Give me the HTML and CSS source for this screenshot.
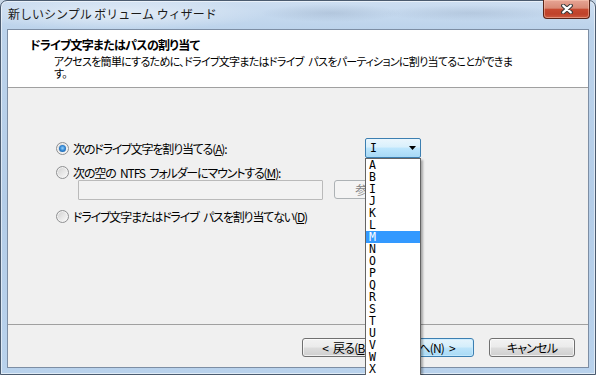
FILE: index.html
```html
<!DOCTYPE html>
<html lang="ja">
<head>
<meta charset="utf-8">
<title>新しいシンプル ボリューム ウィザード</title>
<link rel="stylesheet" href="styles.css">
</head>
<body>
<div class="window">
  <div class="titlebar">
    <span class="title">新しいシンプル ボリューム ウィザード</span>
    <div class="close" aria-label="閉じる">
      <svg width="12" height="10" viewBox="0 0 12 10">
        <path d="M2.2 1.6 L9.8 8.4 M9.8 1.6 L2.2 8.4" stroke="#3a3a3a" stroke-width="4.2" stroke-linecap="round" fill="none"/>
        <path d="M2.2 1.6 L9.8 8.4 M9.8 1.6 L2.2 8.4" stroke="#ffffff" stroke-width="2.2" stroke-linecap="round" fill="none"/>
      </svg>
    </div>
  </div>
  <div class="client">
    <div class="header">
      <div class="h-title">ドライブ文字またはパスの割り当て</div>
      <div class="h-sub">アクセスを簡単にするために、ドライブ文字またはドライブ パスをパーティションに割り当てることができま<br>す。</div>
    </div>
    <div class="content">
      <div class="row row-first">
        <div class="opt opt-first"><span class="radio checked"></span><span>次のドライブ文字を割り当てる(<u>A</u>):</span></div>
        <div class="combo">
          <span class="combo-val">I</span>
          <span class="combo-arrow"></span>
          <ul class="droplist">
            <li>A</li><li>B</li><li>I</li><li>J</li><li>K</li><li>L</li>
            <li class="sel">M</li><li>N</li><li>O</li><li>P</li><li>Q</li><li>R</li>
            <li>S</li><li>T</li><li>U</li><li>V</li><li>W</li><li>X</li>
          </ul>
        </div>
      </div>
      <div class="row row-second">
        <div class="opt"><span class="radio"></span><span>次の空の NTFS フォルダーにマウントする(<u>M</u>):</span></div>
      </div>
      <div class="field-row">
        <div class="field"></div>
        <div class="btn disabled">参照(<u>R</u>)...</div>
      </div>
      <div class="row row-third">
        <div class="opt"><span class="radio"></span><span>ドライブ文字またはドライブ パスを割り当てない(<u>D</u>)</span></div>
      </div>
    </div>
    <div class="footer">
      <div class="btn">&lt; 戻る(<u>B</u>)</div>
      <div class="btn default">次へ(N) &gt;</div>
      <div class="btn cancel">キャンセル</div>
    </div>
  </div>
</div>
</body>
</html>
```

FILE: styles.css
```css
html, body {
  margin: 0;
  padding: 0;
  width: 596px;
  height: 375px;
  overflow: hidden;
  background: #c7d6e6;
}

.window {
  box-sizing: border-box;
  width: 596px;
  height: 375px;
  border: 1px solid #4b5b6f;
  border-radius: 7px 7px 0 0;
  padding: 0 6px 6px 6px;
  display: flex;
  flex-direction: column;
  background: linear-gradient(180deg, #cddef1 0px, #bcd3eb 28px, #b4cde8 200px, #b9d2ec 100%);
  box-shadow: inset 0 0 0 1px rgba(255, 255, 255, 0.55);
  font-family: "Noto Sans CJK JP", "Noto Sans", sans-serif;
  font-size: 12px;
  color: #000;
}

.titlebar {
  height: 28px;
  display: flex;
  align-items: flex-start;
  margin: 0 -6px;
  padding: 0 6px;
  background:
    radial-gradient(ellipse 150px 16px at 118px 13px, rgba(255, 255, 255, 0.5), rgba(255, 255, 255, 0) 100%),
    radial-gradient(ellipse 70px 9px at 330px 12px, rgba(80, 100, 130, 0.16), rgba(80, 100, 130, 0) 100%),
    radial-gradient(ellipse 90px 8px at 470px 12px, rgba(80, 100, 130, 0.14), rgba(80, 100, 130, 0) 100%);
}

.title {
  margin-top: 5px;
  padding-left: 1px;
  line-height: 16px;
  white-space: nowrap;
  color: #1a1a1a;
}

.close {
  margin-left: auto;
  margin-top: -1px;
  margin-right: -1px;
  box-sizing: border-box;
  width: 47px;
  height: 19px;
  border: 1px solid #5a2418;
  border-top: none;
  border-radius: 0 0 4px 4px;
  display: flex;
  align-items: center;
  justify-content: center;
  background: linear-gradient(180deg, #e6a595 0%, #d98a76 45%, #c64a31 52%, #bf422a 78%, #cc5b42 100%);
  box-shadow: inset 0 0 0 1px rgba(255, 210, 190, 0.45);
}

.close svg { display: block; }

.client {
  flex: 1;
  display: flex;
  flex-direction: column;
  border: 1px solid #7d8ea4;
  background: #f0f0f0;
  font-feature-settings: "palt" 1;
  letter-spacing: -1.15px;
  word-spacing: 3px;
}

.header {
  box-sizing: border-box;
  height: 58px;
  background: #fff;
  border-bottom: 1px solid #a0a0a0;
  padding: 7px 0 0 22px;
}

.h-title {
  font-weight: bold;
  line-height: 16px;
  letter-spacing: -0.7px;
}

.h-sub {
  margin-top: 2px;
  padding-left: 24px;
  line-height: 12px;
  font-size: 11px;
  letter-spacing: -0.7px;
}

.content {
  flex: 1;
  padding: 50px 0 0 48px;
}

.row {
  display: flex;
  align-items: center;
  height: 16px;
}

.row-first { height: 20px; }
.row-second { margin-top: 6px; }
.row-third { margin-top: 8px; }

.opt {
  display: flex;
  align-items: center;
  gap: 4px;
  white-space: nowrap;
}

.opt-first { width: 309px; }

u {
  text-decoration: underline;
  text-underline-offset: 1px;
}

.radio {
  position: relative;
  flex: none;
  box-sizing: border-box;
  width: 13px;
  height: 13px;
  border-radius: 50%;
  border: 1px solid #8f9092;
  background: linear-gradient(135deg, #cdcdcd 0%, #e4e4e4 45%, #fbfbfb 100%);
  box-shadow: inset 0 0 0 1px #f3f3f3;
}

.radio.checked::after {
  content: "";
  position: absolute;
  left: 2px;
  top: 2px;
  width: 7px;
  height: 7px;
  border-radius: 50%;
  background: radial-gradient(circle at 50% 45%, #96d3fb 0%, #2f82d0 50%, #104f93 100%);
}

.combo {
  position: relative;
  z-index: 10;
  box-sizing: border-box;
  width: 56px;
  height: 20px;
  border: 1px solid #3c7fb1;
  border-radius: 2px;
  padding: 0 4px;
  display: flex;
  align-items: center;
  background: linear-gradient(180deg, #eaf6fd 0%, #d9f0fc 45%, #bee6fd 50%, #a7d9f5 100%);
  font-family: "DejaVu Sans Mono", monospace;
  font-size: 11.5px;
  letter-spacing: 0;
}

.combo-arrow {
  margin-left: auto;
  width: 7px;
  height: 4px;
  background: #000;
  clip-path: polygon(0 0, 100% 0, 50% 100%);
}

.droplist {
  position: absolute;
  left: -1px;
  top: calc(100% + 1px);
  box-sizing: border-box;
  width: 56px;
  height: 230px;
  margin: 0;
  padding: 0;
  list-style: none;
  background: #fff;
  border: 1px solid #646464;
  box-shadow: 2px 2px 2px rgba(0, 0, 0, 0.3);
}

.droplist li {
  height: 12px;
  line-height: 12px;
  padding-left: 3px;
}

.droplist li.sel {
  background: #3399ff;
  color: #fff;
}

.field-row {
  display: flex;
  gap: 11px;
  margin-left: 22px;
  height: 20px;
  align-items: flex-start;
}

.field {
  box-sizing: border-box;
  width: 245px;
  height: 20px;
  border: 1px solid #bababa;
  border-radius: 1px;
  background: #f2f2f2;
}

.btn {
  box-sizing: border-box;
  width: 86px;
  height: 19px;
  border: 1px solid #707070;
  border-radius: 3px;
  display: flex;
  align-items: center;
  justify-content: center;
  white-space: pre;
  background: linear-gradient(180deg, #f2f2f2 0%, #ebebeb 48%, #dddddd 52%, #cfcfcf 100%);
  box-shadow: inset 0 0 0 1px rgba(255, 255, 255, 0.65);
  letter-spacing: -0.8px;
}

.btn.default {
  border-color: #3c7fb1;
  background: linear-gradient(180deg, #e5f4fc 0%, #d4eefb 48%, #bde4fa 52%, #a9daf5 100%);
  box-shadow: inset 0 0 0 1px rgba(200, 235, 255, 0.8);
}

.btn.disabled {
  border-color: #adb2b5;
  background: #f4f4f4;
  color: #838383;
  box-shadow: none;
}

.footer {
  box-sizing: border-box;
  height: 43px;
  border-top: 1px solid #a0a0a0;
  display: flex;
  justify-content: flex-end;
  align-items: flex-start;
  padding: 13px 13px 0 0;
}

.btn.cancel { margin-left: 15px; }
```
